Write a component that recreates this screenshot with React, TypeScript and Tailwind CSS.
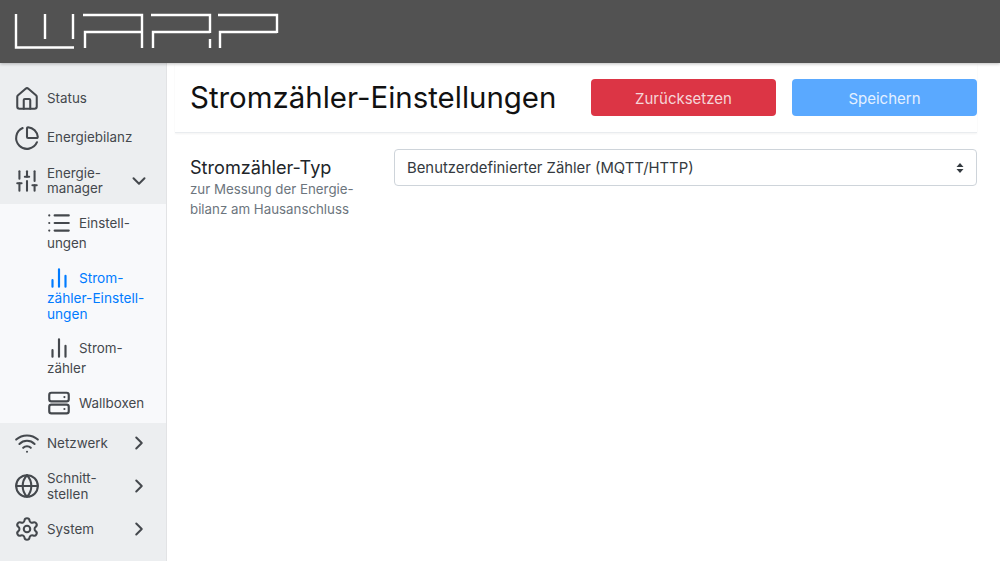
import {
  ChartPie,
  ChevronDown,
  ChevronRight,
  Globe,
  House,
  List,
  Settings,
  SlidersVertical,
  Wifi,
} from 'lucide-react';

function Logo() {
  return (
    <svg width="300" height="63" viewBox="0 0 300 63" fill="none" stroke="#fff" strokeWidth="2.4" className="block">
      <path d="M16 14V47.5H74M45 14V39M73 14V39" />
      <path d="M83 15H142V48M85 48V32H141" />
      <path d="M151 15H210V33M153 48V32H210M210 39V48" />
      <path d="M218 15H277V33M220 48V32H277" />
    </svg>
  );
}

function BarsIcon({ className }: { className?: string }) {
  return (
    <svg width="26" height="26" viewBox="0 0 24 24" fill="none" stroke="currentColor" strokeWidth="2" strokeLinecap="round" className={className}>
      <path d="M18 20V10M12 20V4M6 20v-6" />
    </svg>
  );
}

function ServerIcon({ className }: { className?: string }) {
  return (
    <svg width="26" height="26" viewBox="0 0 24 24" fill="none" stroke="currentColor" strokeWidth="2" strokeLinecap="round" className={className}>
      <rect x="3" y="2.5" width="18" height="8" rx="2" />
      <rect x="3" y="13.5" width="18" height="8" rx="2" />
      <path d="M17 6.5h.01M17 17.5h.01" />
    </svg>
  );
}

const TOP_LINKS = [
  { label: 'Status', icon: House },
  { label: 'Energiebilanz', icon: ChartPie },
];

const BOTTOM_LINKS = [
  { lines: ['Netzwerk'], icon: Wifi, height: 'h-[40px]' },
  { lines: ['Schnitt-', 'stellen'], icon: Globe, height: 'h-[46px]' },
  { lines: ['System'], icon: Settings, height: 'h-[40px]' },
];

export default function App() {
  return (
    <div className="flex h-[561px] w-[1000px] flex-col overflow-hidden bg-white font-['Inter',sans-serif] text-[#212529]">
      {/* Header */}
      <header className="relative z-10 h-[63px] shrink-0 bg-[#525252] shadow-[0_1px_3px_rgba(0,0,0,0.25)]">
        <Logo />
      </header>

      <div className="flex min-h-0 flex-1">
        {/* Sidebar */}
        <aside className="w-[167px] shrink-0 border-r border-[#e2e3e5] bg-[#eceef0] pt-[16px] text-[13.4px] text-[#44484d]">
          {TOP_LINKS.map((link) => {
            const Icon = link.icon;
            return (
              <div key={link.label} className="flex h-[39px] items-center gap-[7px] pl-[14px]">
                <Icon size={26} strokeWidth={1.9} className="shrink-0" />
                <span>{link.label}</span>
              </div>
            );
          })}
          <div className="flex h-[47px] items-center pl-[14px] pr-[16px]">
            <SlidersVertical size={26} strokeWidth={1.9} className="mr-[7px] shrink-0" />
            <span className="flex-1 leading-[15px]">
              Energie-
              <br />
              manager
            </span>
            <ChevronDown size={22} strokeWidth={2.2} />
          </div>

          {/* Submenu */}
          <div className="flex flex-col gap-[15px] bg-[#f8f9fb] pb-[8px] pl-[47px] pt-[7px] leading-[16px]">
            <div>
              <div className="flex h-[24px] items-center">
                <List size={26} strokeWidth={2} className="-ml-[1px] mr-[7px] shrink-0" />
                Einstell-
              </div>
              ungen
            </div>
            <div className="text-[13.65px] text-[#007bff]">
              <div className="flex h-[24px] items-center">
                <BarsIcon className="-ml-[1px] mr-[7px] shrink-0" />
                Strom-
              </div>
              zähler-Einstell-
              <br />
              ungen
            </div>
            <div className="-mt-[1px]">
              <div className="flex h-[24px] items-center">
                <BarsIcon className="-ml-[1px] mr-[7px] shrink-0" />
                Strom-
              </div>
              zähler
            </div>
            <div className="flex h-[24px] items-center">
              <ServerIcon className="-ml-[1px] mr-[7px] shrink-0" />
              Wallboxen
            </div>
          </div>

          {BOTTOM_LINKS.map((link) => {
            const Icon = link.icon;
            return (
              <div key={link.lines[0]} className={`flex items-center pl-[14px] pr-[16px] ${link.height}`}>
                <Icon size={26} strokeWidth={1.9} className="mr-[7px] shrink-0" />
                <span className="flex-1 leading-[16px]">
                  {link.lines.map((line) => (
                    <span key={line} className="block">
                      {line}
                    </span>
                  ))}
                </span>
                <ChevronRight size={22} strokeWidth={2.2} />
              </div>
            );
          })}
        </aside>

        {/* Main */}
        <main className="min-w-0 flex-1 pr-[23px]">
          <div className="ml-[8px] flex h-[70px] items-center justify-between border-b border-[#e9ecef] pl-[15px] shadow-[0_1px_2px_rgba(0,0,0,0.05)]">
            <h1 className="text-[29.45px] font-normal leading-none text-[#111]">Stromzähler-Einstellungen</h1>
            <div className="flex gap-[16px]">
              <button className="h-[37px] w-[185px] rounded-[4px] bg-[#dc3545] pt-[3px] text-[15px] text-[#f5d5d8]">Zurücksetzen</button>
              <button className="h-[37px] w-[185px] rounded-[4px] bg-[#5aa9ff] pt-[3px] text-[15px] text-[#e4f0ff]">Speichern</button>
            </div>
          </div>

          <div className="ml-[23px] mt-[16px] flex">
            <div className="w-[204px] shrink-0 pt-[6px]">
              <div className="text-[18.1px] leading-[24px] text-[#212529]">Stromzähler-Typ</div>
              <div className="text-[13.3px] leading-[20px] text-[#6c757d]">
                zur Messung der Energie-
                <br />
                bilanz am Hausanschluss
              </div>
            </div>
            <div className="flex h-[37px] flex-1 items-center justify-between rounded-[4px] border border-[#ced4da] px-[12px] text-[14.85px] text-[#343a40]">
              <span className="pt-[1px]">Benutzerdefinierter Zähler (MQTT/HTTP)</span>
              <svg width="8" height="12" viewBox="0 0 8 12" fill="#343a40">
                <path d="M4 1L7.5 5H.5zM4 11L.5 7h7z" />
              </svg>
            </div>
          </div>
        </main>
      </div>
    </div>
  );
}
